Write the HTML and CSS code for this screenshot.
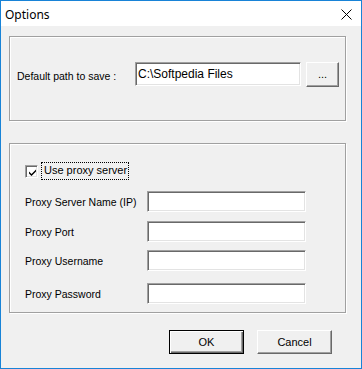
FILE: index.html
```html
<!DOCTYPE html>
<html lang="en">

<head>
    <meta charset="UTF-8">
    <meta name="viewport" content="width=device-width, initial-scale=1.0">
    <title>Options</title>
    <link rel="stylesheet" href="styles.css">
</head>

<body>

    <div class="window">
        <div class="titlebar">
            <span class="title">Options</span>
            <svg class="close" width="11" height="11" viewBox="0 0 11 11">
                <path d="M0.5 0.5 L10.5 10.5 M10.5 0.5 L0.5 10.5" stroke="#000" stroke-width="1" fill="none" />
            </svg>
        </div>

        <div class="content">
            <div class="group group-path">
                <div class="path-row">
                    <label class="path-label" for="save-path">Default path to save :</label>
                    <input type="text" id="save-path" class="field path-field" value="C:\Softpedia Files">
                    <button class="btn btn-browse">...</button>
                </div>
            </div>

            <div class="group group-proxy">
                <div class="check-row">
                    <span class="checkbox">
                        <svg width="9" height="9" viewBox="0 0 9 9">
                            <path d="M1 3.5 L3.5 6 L8 1.5 L8 3.5 L3.5 8 L1 5.5 Z" fill="#000" />
                        </svg>
                    </span>
                    <span class="check-label">Use proxy server</span>
                </div>
                <div class="form-row row-1">
                    <label for="proxy-name">Proxy Server Name (IP)</label>
                    <input type="text" id="proxy-name" class="field">
                </div>
                <div class="form-row row-2">
                    <label for="proxy-port">Proxy Port</label>
                    <input type="text" id="proxy-port" class="field">
                </div>
                <div class="form-row row-3">
                    <label for="proxy-user">Proxy Username</label>
                    <input type="text" id="proxy-user" class="field">
                </div>
                <div class="form-row row-4">
                    <label for="proxy-pass">Proxy Password</label>
                    <input type="password" id="proxy-pass" class="field">
                </div>
            </div>

            <div class="actions">
                <button class="btn btn-default">OK</button>
                <button class="btn">Cancel</button>
            </div>
        </div>
    </div>

</body>

</html>
```

FILE: styles.css
```css
body {
    margin: 0;
    font-family: 'Liberation Sans', Arial, sans-serif;
    font-size: 10.5px;
    color: #000;
}

.window {
    width: 362px;
    height: 369px;
    box-sizing: border-box;
    border: 1px solid #1883d7;
    background-color: #f0f0f0;
}

.titlebar {
    height: 25px;
    background-color: #ffffff;
    display: flex;
    align-items: center;
    justify-content: space-between;
    padding: 0 9px 0 4px;
}

.title {
    font-family: 'Noto Sans', sans-serif;
    font-size: 12px;
    margin-top: 1px;
}

.close {
    margin-top: 2px;
}

.content {
    padding: 10px 15px 0 8px;
}

/* etched group frame */
.group {
    box-sizing: border-box;
    border: 1px solid #a0a0a0;
    box-shadow: inset 1px 1px 0 #ffffff, 1px 1px 0 #ffffff;
}

.group-path {
    height: 85px;
    padding: 25px 0 0 7px;
}

.path-row {
    display: flex;
    align-items: flex-start;
}

.path-label {
    width: 118px;
    padding-top: 8px;
}

.field {
    box-sizing: border-box;
    margin: 0;
    padding: 0 3px;
    height: 21px;
    width: 159px;
    background-color: #ffffff;
    border-top: 1px solid #a0a0a0;
    border-left: 1px solid #a0a0a0;
    border-bottom: 1px solid #ffffff;
    border-right: 1px solid #ffffff;
    box-shadow: inset 1px 1px 0 #696969, inset -1px -1px 0 #e3e3e3;
    font-family: 'Liberation Sans', Arial, sans-serif;
    font-size: 12px;
    outline: none;
}

.path-field {
    width: 166px;
    height: 24px;
    padding: 0 2px;
}

.btn {
    box-sizing: border-box;
    margin: 0;
    padding: 0;
    width: 75px;
    height: 24px;
    background-color: #f0f0f0;
    border-top: 1px solid #ffffff;
    border-left: 1px solid #ffffff;
    border-bottom: 1px solid #696969;
    border-right: 1px solid #696969;
    box-shadow: inset -1px -1px 0 #a0a0a0;
    font-family: 'Liberation Sans', Arial, sans-serif;
    font-size: 11px;
    color: #000;
}

.btn-browse {
    width: 33px;
    height: 25px;
    margin-left: 5px;
    padding-bottom: 2px;
}

.btn-default {
    border: 1px solid #000;
    box-shadow: inset 1px 1px 0 #ffffff, inset -1px -1px 0 #696969, inset -2px -2px 0 #a0a0a0;
}

.group-proxy {
    margin-top: 22px;
    height: 170px;
    padding: 18px 0 0 15px;
}

.check-row {
    display: flex;
    align-items: center;
    height: 17px;
}

.checkbox {
    box-sizing: border-box;
    width: 13px;
    height: 13px;
    background-color: #ffffff;
    border-top: 1px solid #a0a0a0;
    border-left: 1px solid #a0a0a0;
    border-bottom: 1px solid #ffffff;
    border-right: 1px solid #ffffff;
    box-shadow: inset 1px 1px 0 #696969, inset -1px -1px 0 #e3e3e3;
    display: flex;
    align-items: center;
    justify-content: center;
    margin-top: 2px;
}

.checkbox svg {
    margin: 1px 0 0 1px;
}

.check-label {
    margin-left: 4px;
    padding: 1px 1px 2px 2px;
    outline: 1px dotted #000;
    outline-offset: 0;
    line-height: 13px;
    font-size: 11px;
}

.form-row {
    display: flex;
    align-items: center;
}

.form-row label {
    width: 122px;
}

.row-1 {
    margin-top: 12px;
}

.row-2 {
    margin-top: 9px;
}

.row-3 {
    margin-top: 8px;
}

.row-4 {
    margin-top: 12px;
}

.actions {
    display: flex;
    justify-content: flex-end;
    gap: 13px;
    margin: 17px 14px 0 0;
}
```
